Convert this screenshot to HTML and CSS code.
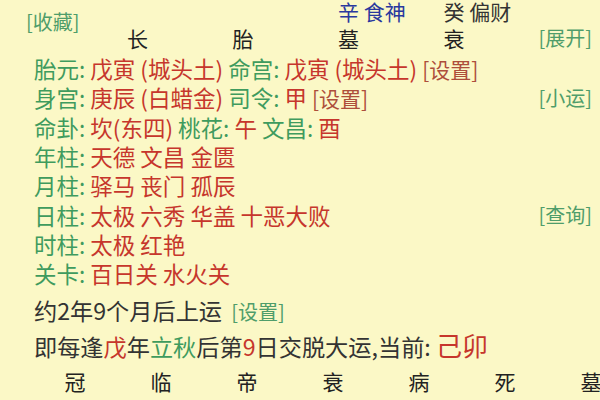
FILE: index.html
```html
<!DOCTYPE html>
<html lang="zh-CN">

<head>
    <meta charset="UTF-8">
    <meta name="viewport" content="width=device-width, initial-scale=1.0">
    <title>排盘</title>
    <link rel="stylesheet" href="styles.css">
</head>

<body>

    <div class="head">
        <div class="gan"></div>
        <div class="gan"></div>
        <div class="gan blue">辛 食神</div>
        <div class="gan">癸 偏财</div>

        <span class="btn fav">[收藏]</span>

        <div class="stage">长</div>
        <div class="stage">胎</div>
        <div class="stage">墓</div>
        <div class="stage last">衰 <span class="btn">[展开]</span></div>
    </div>

    <div class="info">
        <div class="line">
            <div><span class="k">胎元:</span> <span class="v">戊寅 (城头土)</span> <span class="k">命宫:</span> <span class="v">戊寅 (城头土)</span> <span class="set">[设置]</span></div>
        </div>
        <div class="line">
            <div><span class="k">身宫:</span> <span class="v">庚辰 (白蜡金)</span> <span class="k">司令:</span> <span class="v">甲</span> <span class="set">[设置]</span></div>
            <span class="btn">[小运]</span>
        </div>
        <div class="line">
            <div><span class="k">命卦:</span> <span class="v">坎(东四)</span> <span class="k">桃花:</span> <span class="v">午</span> <span class="k">文昌:</span> <span class="v">酉</span></div>
        </div>
        <div class="line">
            <div><span class="k">年柱:</span> <span class="v">天德 文昌 金匮</span></div>
        </div>
        <div class="line">
            <div><span class="k">月柱:</span> <span class="v">驿马 丧门 孤辰</span></div>
        </div>
        <div class="line">
            <div><span class="k">日柱:</span> <span class="v">太极 六秀 华盖 十恶大败</span></div>
            <span class="btn">[查询]</span>
        </div>
        <div class="line">
            <div><span class="k">时柱:</span> <span class="v">太极 红艳</span></div>
        </div>
        <div class="line">
            <div><span class="k">关卡:</span> <span class="v">百日关 水火关</span></div>
        </div>
    </div>

    <div class="yun">
        <div class="start">约2年9个月后上运 <span class="btn">[设置]</span></div>
        <div class="jiao">即每逢<span class="v">戊</span>年<span class="k">立秋</span>后第<span class="v">9</span>日交脱大运,当前: <span class="cur">己卯</span></div>
    </div>

    <div class="steps">
        <div>冠</div>
        <div>临</div>
        <div>帝</div>
        <div>衰</div>
        <div>病</div>
        <div>死</div>
        <div>墓</div>
    </div>

</body>

</html>
```

FILE: styles.css
```css
* {
    margin: 0;
    padding: 0;
    box-sizing: border-box;
    font-family: "Noto Sans CJK SC", "Noto Sans", sans-serif;
}

body {
    width: 600px;
    height: 400px;
    overflow: hidden;
    background-color: #fbf8c6;
    color: #333;
    font-size: 22.5px;
}

.btn {
    color: #4f9d6a;
    font-size: 20px;
    line-height: 24px;
    white-space: nowrap;
}

.k {
    color: #3f9b5e;
}

.v {
    color: #c6362c;
}

.set {
    color: #ad4e3b;
    font-size: 21px;
}

/* 顶部四柱 */
.head {
    display: grid;
    grid-template-columns: 127px repeat(3, 105.5px) 1fr;
    grid-template-rows: 22px 32px;
    padding-right: 8px;
    font-size: 21px;
}

.gan {
    line-height: 22px;
    color: #333;
}

.gan.blue {
    color: #2a389e;
}

.fav {
    grid-column: 1;
    grid-row: 1 / 3;
    align-self: start;
    margin-top: 10px;
    padding-left: 26px;
}

.stage {
    grid-row: 2;
    line-height: 32px;
    color: #222;
}

.stage.last {
    display: flex;
    justify-content: space-between;
    align-items: center;
}

.info {
    padding: 0 8px 0 34px;
}

.line {
    display: flex;
    justify-content: space-between;
    align-items: center;
    height: 29.3px;
    line-height: 29px;
    white-space: nowrap;
}

.yun {
    padding: 4px 8px 0 34px;
    font-size: 23.2px;
}

.start {
    line-height: 36px;
}

.start .btn {
    margin-left: 4px;
}

.jiao {
    line-height: 34px;
    white-space: nowrap;
}

.cur {
    color: #c6362c;
    font-size: 26px;
}

.steps {
    display: grid;
    grid-template-columns: repeat(7, 86px);
    padding-left: 32px;
    margin-top: 3px;
    font-size: 21px;
    line-height: 30px;
    color: #222;
}

.steps div {
    text-align: center;
}
```
